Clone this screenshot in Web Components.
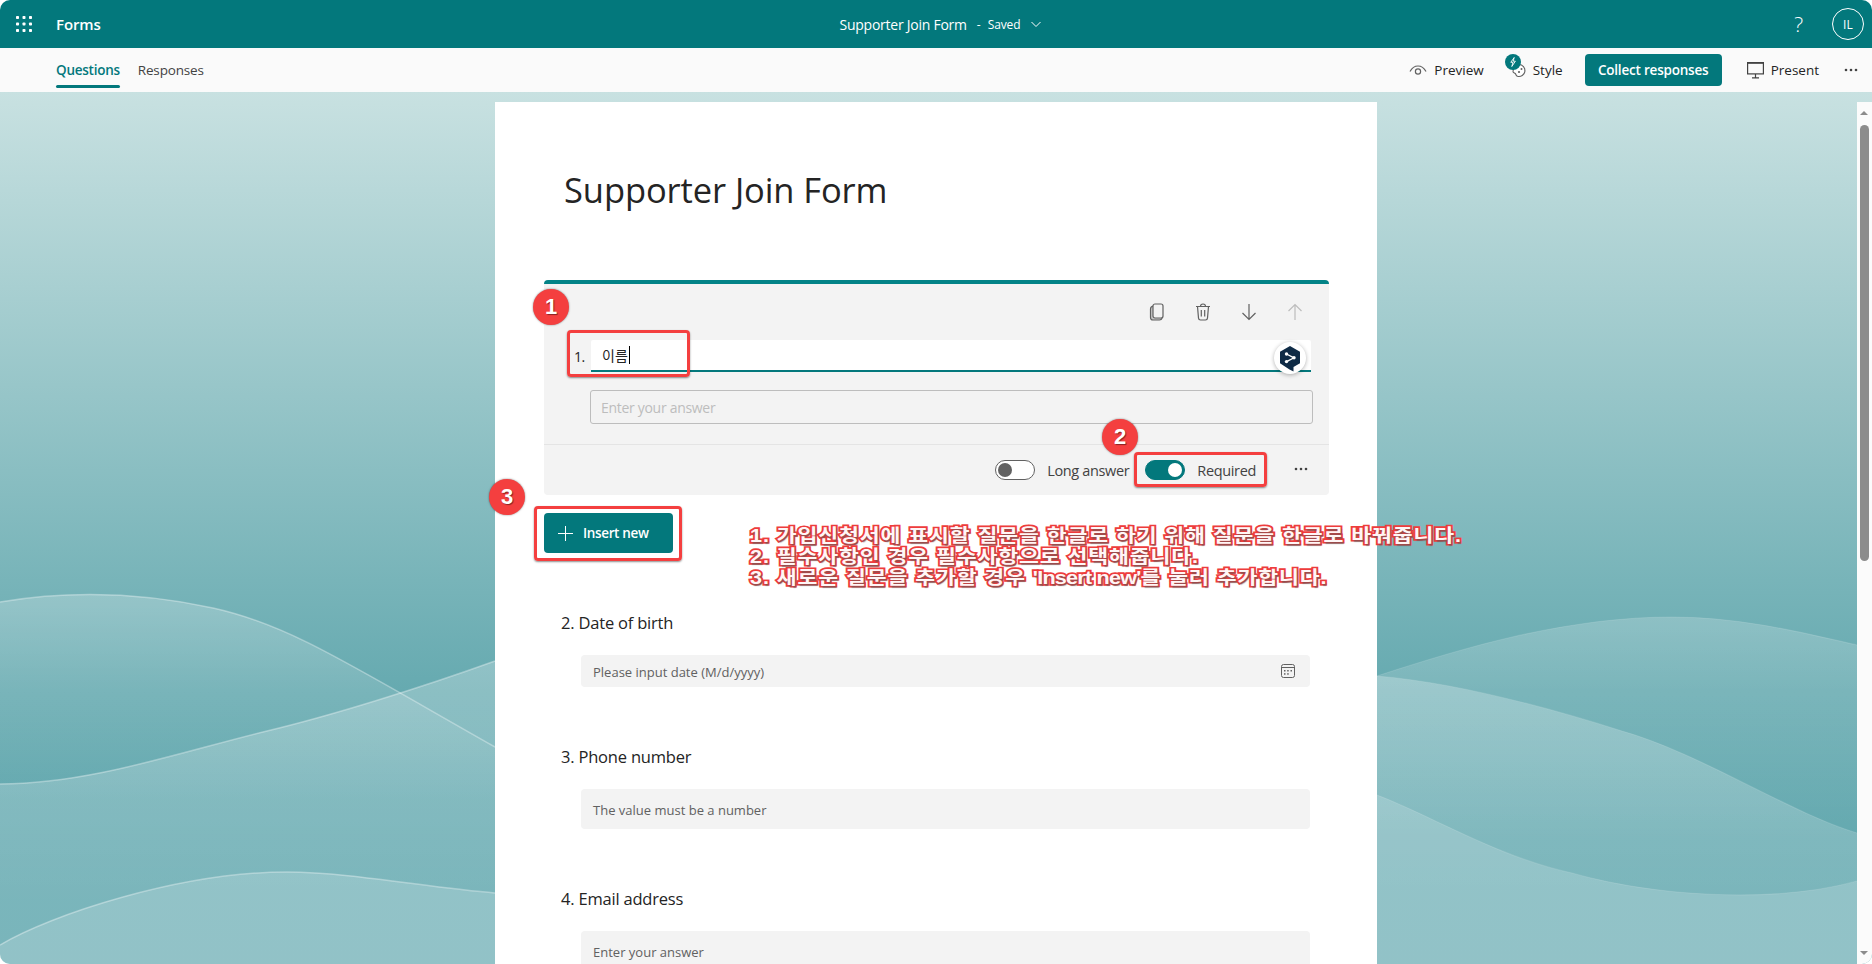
<!DOCTYPE html>
<html lang="en">
<head>
<meta charset="utf-8">
<title>Supporter Join Form</title>
<style>
  html, body { margin: 0; height: 100%; background: #fff; overflow: hidden; }
  body { font-family: "Open Sans", "Noto Sans CJK KR", sans-serif; color: #242424; }
</style>
</head>
<body>
<forms-app>
  <forms-topbar title-text="Supporter Join Form"></forms-topbar>
  <forms-subbar></forms-subbar>
  <forms-canvas>
    <form-sheet heading="Supporter Join Form">
      <active-question number="1." value="이름" placeholder="Enter your answer"></active-question>
      <insert-button>Insert new</insert-button>
      <question-field label="2. Date of birth" hint="Please input date (M/d/yyyy)" height="32" calendar></question-field>
      <question-field label="3. Phone number" hint="The value must be a number" height="40"></question-field>
      <question-field label="4. Email address" hint="Enter your answer" height="40"></question-field>

      <!-- tutorial marks painted over the form -->
      <mark-box style="left:72px;top:228px;width:123px;height:47px"></mark-box>
      <mark-box style="left:639px;top:350px;width:133px;height:35px"></mark-box>
      <mark-box style="left:39px;top:404px;width:148px;height:55px"></mark-box>
      <mark-badge style="left:38px;top:187px">1</mark-badge>
      <mark-badge style="left:607px;top:317px">2</mark-badge>
      <mark-badge style="left:-6px;top:377px">3</mark-badge>
      <mark-note style="left:255px;top:424px">
        <div>1. 가입신청서에 표시할 질문을 한글로 하기 위해 질문을 한글로 바꿔줍니다.</div>
        <div>2. 필수사항인 경우 필수사항으로 선택해줍니다.</div>
        <div>3. 새로운 질문을 추가할 경우 <span style="letter-spacing:-.65px">'Insert new'</span>를 눌러 추가합니다.</div>
      </mark-note>
    </form-sheet>
  </forms-canvas>
</forms-app>

<script>
  'use strict';

  const TEAL = '#03787c';

  const ICONS = {
    waffle: '<svg width="16" height="16" viewBox="0 0 16 16" fill="#fff"><rect x="0" y="0" width="3" height="3" rx=".8"/><rect x="6.5" y="0" width="3" height="3" rx=".8"/><rect x="13" y="0" width="3" height="3" rx=".8"/><rect x="0" y="6.5" width="3" height="3" rx=".8"/><rect x="6.5" y="6.5" width="3" height="3" rx=".8"/><rect x="13" y="6.5" width="3" height="3" rx=".8"/><rect x="0" y="13" width="3" height="3" rx=".8"/><rect x="6.5" y="13" width="3" height="3" rx=".8"/><rect x="13" y="13" width="3" height="3" rx=".8"/></svg>',
    chevron: '<svg width="12" height="12" viewBox="0 0 12 12" fill="none" stroke="#fff" stroke-width="1"><path d="M1.5 4l4.5 4.5L10.5 4"/></svg>',
    eye: '<svg width="18" height="14" viewBox="0 0 18 14" fill="none" stroke="#616161" stroke-width="1.2"><path d="M1 8.5C3 4.8 5.8 3 9 3s6 1.8 8 5.5"/><circle cx="9" cy="8.5" r="2.6"/></svg>',
    style: '<svg width="22" height="24" viewBox="0 0 22 24"><path d="M14 10.5a6 6 0 1 1-1.6 11.8c-1.600-.4-1.200-2-2.200-2.800-.8-.6-2-.4-2.200-1.800-.4-3 2.600-7.200 6-7.200z" fill="#fff" stroke="#616161" stroke-width="1.1"/><circle cx="14" cy="18" r="1.100" fill="#616161"/><circle cx="16.500" cy="15" r="1" fill="#616161"/><circle cx="8" cy="8" r="8" fill="#03787c"/><path d="M9.200 3.500L5.800 8.300h2.200L6.800 12.500l3.600-5.300H8.200z" fill="none" stroke="#fff" stroke-width=".9"/></svg>',
    present: '<svg width="17" height="17" viewBox="0 0 17 17" fill="none" stroke="#424242" stroke-width="1.200"><rect x=".6" y=".6" width="15.800" height="11.300" fill="none"/><path d="M.6 .9h15.800" stroke-width="1.800"/><path d="M8.500 12v3.500M5 15.800h7"/></svg>',
    dots: '<svg width="14" height="4" viewBox="0 0 14 4" fill="#424242"><circle cx="2" cy="2" r="1.300"/><circle cx="7" cy="2" r="1.300"/><circle cx="12" cy="2" r="1.300"/></svg>',
    copy: '<svg width="16" height="18" viewBox="0 0 16 18" fill="none" stroke="#616161" stroke-width="1.200"><path d="M4 3.200C2.600 3.600 1.500 4.400 1.500 6v8.500C1.500 16 2.600 17 4 17h6.500c1.300 0 2.200-.7 2.600-1.900" fill="#c8c8c8"/><rect x="4" y="1" width="10" height="14" rx="2" fill="#f3f3f3"/></svg>',
    trash: '<svg width="16" height="18" viewBox="0 0 16 18" fill="none" stroke="#616161" stroke-width="1.200"><path d="M1 3.500h14M5.500 3.300C5.500 1.900 6.600 1 8 1s2.500.9 2.500 2.300M2.500 3.500l1 11.600c.1 1.100 1 1.900 2 1.900h5c1 0 1.900-.8 2-1.900l1-11.600M6.300 7v6.600M9.700 7v6.600"/></svg>',
    down: '<svg width="16" height="18" viewBox="0 0 16 18" fill="none" stroke="#616161" stroke-width="1.200"><path d="M8 1v15.500M1.500 10L8 16.500 14.500 10"/></svg>',
    up: '<svg width="16" height="18" viewBox="0 0 16 18" fill="none" stroke="#bdbdbd" stroke-width="1.200"><path d="M8 17V1.500M1.500 8L8 1.500 14.500 8"/></svg>',
    plus: '<svg width="15" height="15" viewBox="0 0 15 15" fill="none" stroke="#fff" stroke-width="1"><path d="M7.500 0v15M0 7.500h15"/></svg>',
    calendar: '<svg width="14" height="14" viewBox="0 0 14 14" fill="none" stroke="#616161" stroke-width="1"><rect x=".5" y=".5" width="13" height="13" rx="2"/><path d="M.5 3.500h13"/><g fill="#616161" stroke="none"><rect x="3" y="6" width="1.500" height="1.500"/><rect x="6.200" y="6" width="1.500" height="1.500"/><rect x="9.500" y="6" width="1.500" height="1.500"/><rect x="3" y="9.200" width="1.500" height="1.500"/><rect x="6.200" y="9.200" width="1.500" height="1.500"/></g></svg>',
    deepl: '<svg width="24" height="27" viewBox="0 0 24 27"><path d="M12 1l10 5.800v11.500l-6.500 3.800v4.400l-4-2.100L2 18.300V6.800z" fill="#0f2b46"/><g fill="none" stroke="#fff" stroke-width="1.300"><path d="M8.500 9l7.500 3.800-7.500 3.800"/></g><circle cx="8.500" cy="9" r="1.700" fill="#fff"/><circle cx="8.500" cy="16.600" r="1.700" fill="#fff"/><circle cx="16" cy="12.800" r="1.700" fill="#fff"/></svg>'
  };

  class FormsApp extends HTMLElement {
    constructor() {
      super();
      this.attachShadow({ mode: 'open' }).innerHTML = `
        <style>
          :host { display: flex; flex-direction: column; height: 964px; overflow: hidden; border-radius: 10px; background: #fff; }
        </style>
        <slot></slot>`;
    }
  }

  class FormsTopbar extends HTMLElement {
    constructor() {
      super();
      const title = this.getAttribute('title-text');
      this.attachShadow({ mode: 'open' }).innerHTML = `
        <style>
          :host { display: grid; grid-template-columns: 1fr auto 1fr; align-items: center; height: 48px; background: ${TEAL}; color: #fff; flex: none; }
          .left { display: flex; align-items: center; padding-left: 16px; }
          .brand { margin-left: 24px; font-size: 15px; font-weight: 600; letter-spacing: -.1px; }
          .center { display: flex; align-items: center; margin-left: 10px; }
          .doc { font-size: 14px; font-weight: 500; letter-spacing: -.25px; }
          .dash { font-size: 12px; margin: 0 7px 0 10px; }
          .saved { font-size: 12px; font-weight: 500; letter-spacing: -.1px; }
          .center svg { margin-left: 10px; display: block; }
          .right { display: flex; justify-content: flex-end; align-items: center; padding-right: 8px; }
          .help { font-size: 21px; font-weight: 300; margin-right: 29px; font-family: "Open Sans", sans-serif; }
          .avatar { width: 30px; height: 30px; border: 1px solid #fff; border-radius: 50%; display: flex; align-items: center; justify-content: center; font-size: 12px; letter-spacing: .2px; }
        </style>
        <div class="left">${ICONS.waffle}<span class="brand">Forms</span></div>
        <div class="center"><span class="doc">${title}</span><span class="dash">-</span><span class="saved">Saved</span>${ICONS.chevron}</div>
        <div class="right"><span class="help">?</span><span class="avatar">IL</span></div>`;
    }
  }

  class FormsSubbar extends HTMLElement {
    constructor() {
      super();
      this.attachShadow({ mode: 'open' }).innerHTML = `
        <style>
          :host { display: flex; align-items: center; justify-content: space-between; height: 44px; padding: 0 14px 0 56px; background: #fafafa; font-size: 13.500px; flex: none; }
          .tabs { display: flex; gap: 18px; align-self: stretch; }
          .tab { position: relative; display: flex; align-items: center; letter-spacing: -.17px; color: #424242; }
          .tab.on { color: ${TEAL}; font-weight: 600; letter-spacing: -.25px; }
          .tab.on::after { content: ""; position: absolute; left: 0; right: 0; bottom: 4px; height: 3px; border-radius: 2px; background: ${TEAL}; }
          .tools { display: flex; align-items: center; color: #242424; letter-spacing: 0; font-weight: 500; }
          .tool { display: flex; align-items: center; }
          .tool svg { display: block; }
          .preview svg { margin-right: 7px; }
          .style { margin-left: 21px; }
          .style svg { margin: -8px 6px 0 0; }
          .collect { margin-left: 22px; width: 137px; height: 32px; border-radius: 4px; background: ${TEAL}; color: #fff; font-weight: 600; display: flex; align-items: center; justify-content: center; letter-spacing: -.2px; }
          .present { margin-left: 25px; }
          .present svg { margin-right: 7px; }
          .more { margin-left: 25px; }
        </style>
        <div class="tabs"><span class="tab on">Questions</span><span class="tab">Responses</span></div>
        <div class="tools">
          <span class="tool preview">${ICONS.eye}Preview</span>
          <span class="tool style">${ICONS.style}Style</span>
          <span class="collect">Collect responses</span>
          <span class="tool present">${ICONS.present}Present</span>
          <span class="tool more">${ICONS.dots}</span>
        </div>`;
    }
  }

  class FormsCanvas extends HTMLElement {
    constructor() {
      super();
      this.attachShadow({ mode: 'open' }).innerHTML = `
        <style>
          :host { display: block; position: relative; flex: 1; min-height: 0; overflow: hidden; background: linear-gradient(180deg, #c8e1e1 0, #66aab0 598px, #62a8af 872px); }
          .waves { position: absolute; inset: 0; width: 100%; height: 100%; display: block; }
          .main { position: relative; padding-top: 10px; }
          .bar { position: absolute; right: 0; top: 10px; bottom: 0; width: 15px; background: #fbfbfb; }
          .thumb { position: absolute; left: 3px; top: 23px; width: 9px; height: 436px; border-radius: 5px; background: #8c8c8c; }
          .arrow { position: absolute; left: 3px; width: 0; height: 0; border-left: 4.500px solid transparent; border-right: 4.500px solid transparent; }
          .arrow.up { top: 9px; border-bottom: 4px solid #8c8c8c; }
          .arrow.down { bottom: 9px; border-top: 4px solid #8c8c8c; }
        </style>
        <svg class="waves" viewBox="0 92 1872 872" preserveAspectRatio="none">
          <defs>
            <linearGradient id="w1" gradientUnits="userSpaceOnUse" x1="0" y1="590" x2="0" y2="800">
              <stop offset="0" stop-color="#fff" stop-opacity=".24"/><stop offset="1" stop-color="#fff" stop-opacity="0"/>
            </linearGradient>
            <linearGradient id="w2" gradientUnits="userSpaceOnUse" x1="0" y1="660" x2="0" y2="900">
              <stop offset="0" stop-color="#fff" stop-opacity=".26"/><stop offset="1" stop-color="#fff" stop-opacity=".15"/>
            </linearGradient>
            <linearGradient id="w3" gradientUnits="userSpaceOnUse" x1="0" y1="615" x2="0" y2="840">
              <stop offset="0" stop-color="#fff" stop-opacity=".2"/><stop offset="1" stop-color="#fff" stop-opacity="0"/>
            </linearGradient>
          </defs>
          <path d="M0 602C60 592 130 590 213 608C290 625 350 665 495 747V964H0Z" fill="url(#w1)"/>
          <path d="M0 784C90 784 180 752 267 731C330 716 420 688 495 661V964H0Z" fill="url(#w2)"/>
          <path d="M0 945C50 915 180 872 287 872C350 872 430 888 495 893V964H0Z" fill="#fff" fill-opacity=".18"/>
          <path d="M1377 676C1450 652 1560 617 1672 617C1740 617 1800 632 1857 645V964H1377Z" fill="url(#w3)"/>
          <path d="M1377 676C1450 682 1540 705 1622 731C1700 753 1790 813 1857 833V964H1377Z" fill="url(#w2)"/>
          <path d="M1377 795C1430 815 1500 858 1572 873C1650 895 1770 905 1857 881V964H1377Z" fill="#fff" fill-opacity=".18"/>
          <g fill="none" stroke="#fff" stroke-width="1.500" stroke-opacity=".34">
            <path d="M0 602C60 592 130 590 213 608C290 625 350 665 495 747"/>
            <path d="M0 784C90 784 180 752 267 731C330 716 420 688 495 661"/>
            <path d="M0 945C50 915 180 872 287 872C350 872 430 888 495 893"/>
          </g>
          <g fill="none" stroke="#fff" stroke-width="1.200" stroke-opacity=".12">
            <path d="M1377 676C1450 652 1560 617 1672 617C1740 617 1800 632 1857 645"/>
            <path d="M1377 676C1450 682 1540 705 1622 731C1700 753 1790 813 1857 833"/>
            <path d="M1377 795C1430 815 1500 858 1572 873C1650 895 1770 905 1857 881"/>
          </g>
        </svg>
        <div class="main"><slot></slot></div>
        <div class="bar"><div class="arrow up"></div><div class="thumb"></div><div class="arrow down"></div></div>`;
    }
  }

  class FormSheet extends HTMLElement {
    constructor() {
      super();
      this.attachShadow({ mode: 'open' }).innerHTML = `
        <style>
          :host { display: block; position: relative; width: 785px; margin: 0 auto; padding: 64px 48px 40px 49px; background: #fff; }
          h1 { margin: 0 0 66px 20px; height: 48px; line-height: 48px; font-size: 34.500px; font-weight: 400; letter-spacing: -.1px; color: #242424; }
        </style>
        <h1>${this.getAttribute('heading')}</h1>
        <slot></slot>`;
    }
  }

  class ToggleSwitch extends HTMLElement {
    constructor() {
      super();
      this.attachShadow({ mode: 'open' }).innerHTML = `
        <style>
          :host { display: block; box-sizing: border-box; width: 40px; height: 20px; border-radius: 10px; border: 1px solid #616161; background: #fff; position: relative; flex: none; }
          :host([on]) { background: ${TEAL}; border-color: ${TEAL}; }
          i { position: absolute; top: 2px; left: 2px; width: 14px; height: 14px; border-radius: 50%; background: #616161; }
          :host([on]) i { left: auto; right: 2px; background: #fff; }
        </style><i></i>`;
    }
  }

  class ActiveQuestion extends HTMLElement {
    constructor() {
      super();
      this.attachShadow({ mode: 'open' }).innerHTML = `
        <style>
          :host { display: block; box-sizing: border-box; height: 215px; border-top: 4px solid #038387; border-radius: 4px; background: #f3f3f3; }
          .tools { display: flex; justify-content: flex-end; align-items: center; height: 56px; gap: 30px; padding-right: 26px; }
          .tools svg { display: block; }
          .row { display: flex; align-items: center; height: 32px; padding: 0 18px 0 30px; font-size: 14px; }
          .num { width: 17px; font-weight: 500; letter-spacing: -.4px; }
          .input { position: relative; flex: 1; box-sizing: border-box; height: 32px; background: #fff; border-bottom: 2px solid ${TEAL}; border-radius: 2px 2px 0 0; display: flex; align-items: center; padding-left: 11px; font-size: 14px; font-family: "Noto Sans CJK KR", sans-serif; }
          .caret { display: inline-block; width: 1px; height: 18px; background: #000; margin-left: 1px; }
          .deepl { position: absolute; right: 5px; top: 2px; width: 32px; height: 32px; border-radius: 50%; background: #fff; box-shadow: 0 1px 4px rgba(0,0,0,.3); display: flex; align-items: center; justify-content: center; }
          .deepl svg { display: block; }
          .answer { box-sizing: border-box; height: 34px; margin: 18px 16px 0 46px; border: 1px solid #bdbdbd; border-radius: 3px; display: flex; align-items: center; padding-left: 10px; font-size: 14px; color: #bdbdbd; letter-spacing: -.3px; }
          .foot { display: flex; align-items: center; justify-content: flex-end; box-sizing: border-box; height: 51px; margin-top: 20px; border-top: 1px solid #e4e4e4; padding-right: 21px; font-size: 14.500px; letter-spacing: -.35px; color: #424242; }
          .foot span { margin-left: 12px; }
          .gap { margin-left: 16px; }
          .foot svg { margin: -3px 0 0 38px; display: block; }
        </style>
        <div class="tools">${ICONS.copy}${ICONS.trash}${ICONS.down}${ICONS.up}</div>
        <div class="row">
          <span class="num">${this.getAttribute('number')}</span>
          <div class="input">${this.getAttribute('value')}<i class="caret"></i><div class="deepl">${ICONS.deepl}</div></div>
        </div>
        <div class="answer">${this.getAttribute('placeholder')}</div>
        <div class="foot">
          <toggle-switch></toggle-switch><span>Long answer</span>
          <toggle-switch on class="gap"></toggle-switch><span>Required</span>
          ${ICONS.dots}
        </div>`;
    }
  }

  class InsertButton extends HTMLElement {
    constructor() {
      super();
      this.attachShadow({ mode: 'open' }).innerHTML = `
        <style>
          :host { display: flex; align-items: center; box-sizing: border-box; width: 129px; height: 40px; margin-top: 18px; padding-left: 14px; border-radius: 4px; background: ${TEAL}; color: #fff; font-size: 13.500px; font-weight: 600; letter-spacing: -.35px; }
          svg { display: block; margin-right: 10px; }
        </style>
        ${ICONS.plus}<slot></slot>`;
    }
  }

  class QuestionField extends HTMLElement {
    constructor() {
      super();
      const icon = this.hasAttribute('calendar') ? ICONS.calendar : '';
      this.attachShadow({ mode: 'open' }).innerHTML = `
        <style>
          :host { display: block; margin-top: 60px; }
          .label { height: 22px; line-height: 20px; padding-left: 17px; font-size: 16.500px; letter-spacing: -.2px; color: #242424; }
          .box { display: flex; align-items: center; justify-content: space-between; height: ${this.getAttribute('height')}px; margin: 20px 19px 0 37px; padding: 2px 15px 0 12px; box-sizing: border-box; border-radius: 4px; background: #f3f3f3; font-size: 13px; color: #616161; }
          svg { display: block; margin-top: -2px; }
        </style>
        <div class="label">${this.getAttribute('label')}</div>
        <div class="box"><span>${this.getAttribute('hint')}</span>${icon}</div>`;
    }
  }

  class MarkBox extends HTMLElement {
    constructor() {
      super();
      this.attachShadow({ mode: 'open' }).innerHTML = `
        <style>
          :host { position: absolute; box-sizing: border-box; border: 3.500px solid #f43f3f; border-radius: 4px; box-shadow: 0 1px 2px rgba(0,0,0,.45); }
        </style>`;
    }
  }

  class MarkBadge extends HTMLElement {
    constructor() {
      super();
      this.attachShadow({ mode: 'open' }).innerHTML = `
        <style>
          :host { position: absolute; width: 36px; height: 36px; border-radius: 50%; background: #f43f3f; box-shadow: 0 0 2px rgba(0,0,0,.5); display: flex; align-items: center; justify-content: center; color: #fff; font: bold 22px "Liberation Sans", sans-serif; text-shadow: 1px 1px 1px rgba(0,0,0,.45); }
        </style>
        <slot></slot>`;
    }
  }

  class MarkNote extends HTMLElement {
    constructor() {
      super();
      this.attachShadow({ mode: 'open' }).innerHTML = `
        <style>
          :host { position: absolute; white-space: nowrap; transform: scaleX(1.2); transform-origin: 0 0; font: 700 18px/21px "Liberation Sans", "Noto Sans CJK KR", sans-serif; color: #fff6f6; -webkit-text-stroke: 3.300px #ee3c3c; paint-order: stroke fill; text-shadow: 1px 2px 1px rgba(90,90,90,.6); letter-spacing: .75px; }
        </style>
        <slot></slot>`;
    }
  }

  customElements.define('forms-app', FormsApp);
  customElements.define('forms-topbar', FormsTopbar);
  customElements.define('forms-subbar', FormsSubbar);
  customElements.define('forms-canvas', FormsCanvas);
  customElements.define('form-sheet', FormSheet);
  customElements.define('toggle-switch', ToggleSwitch);
  customElements.define('active-question', ActiveQuestion);
  customElements.define('insert-button', InsertButton);
  customElements.define('question-field', QuestionField);
  customElements.define('mark-box', MarkBox);
  customElements.define('mark-badge', MarkBadge);
  customElements.define('mark-note', MarkNote);
</script>
</body>
</html>
